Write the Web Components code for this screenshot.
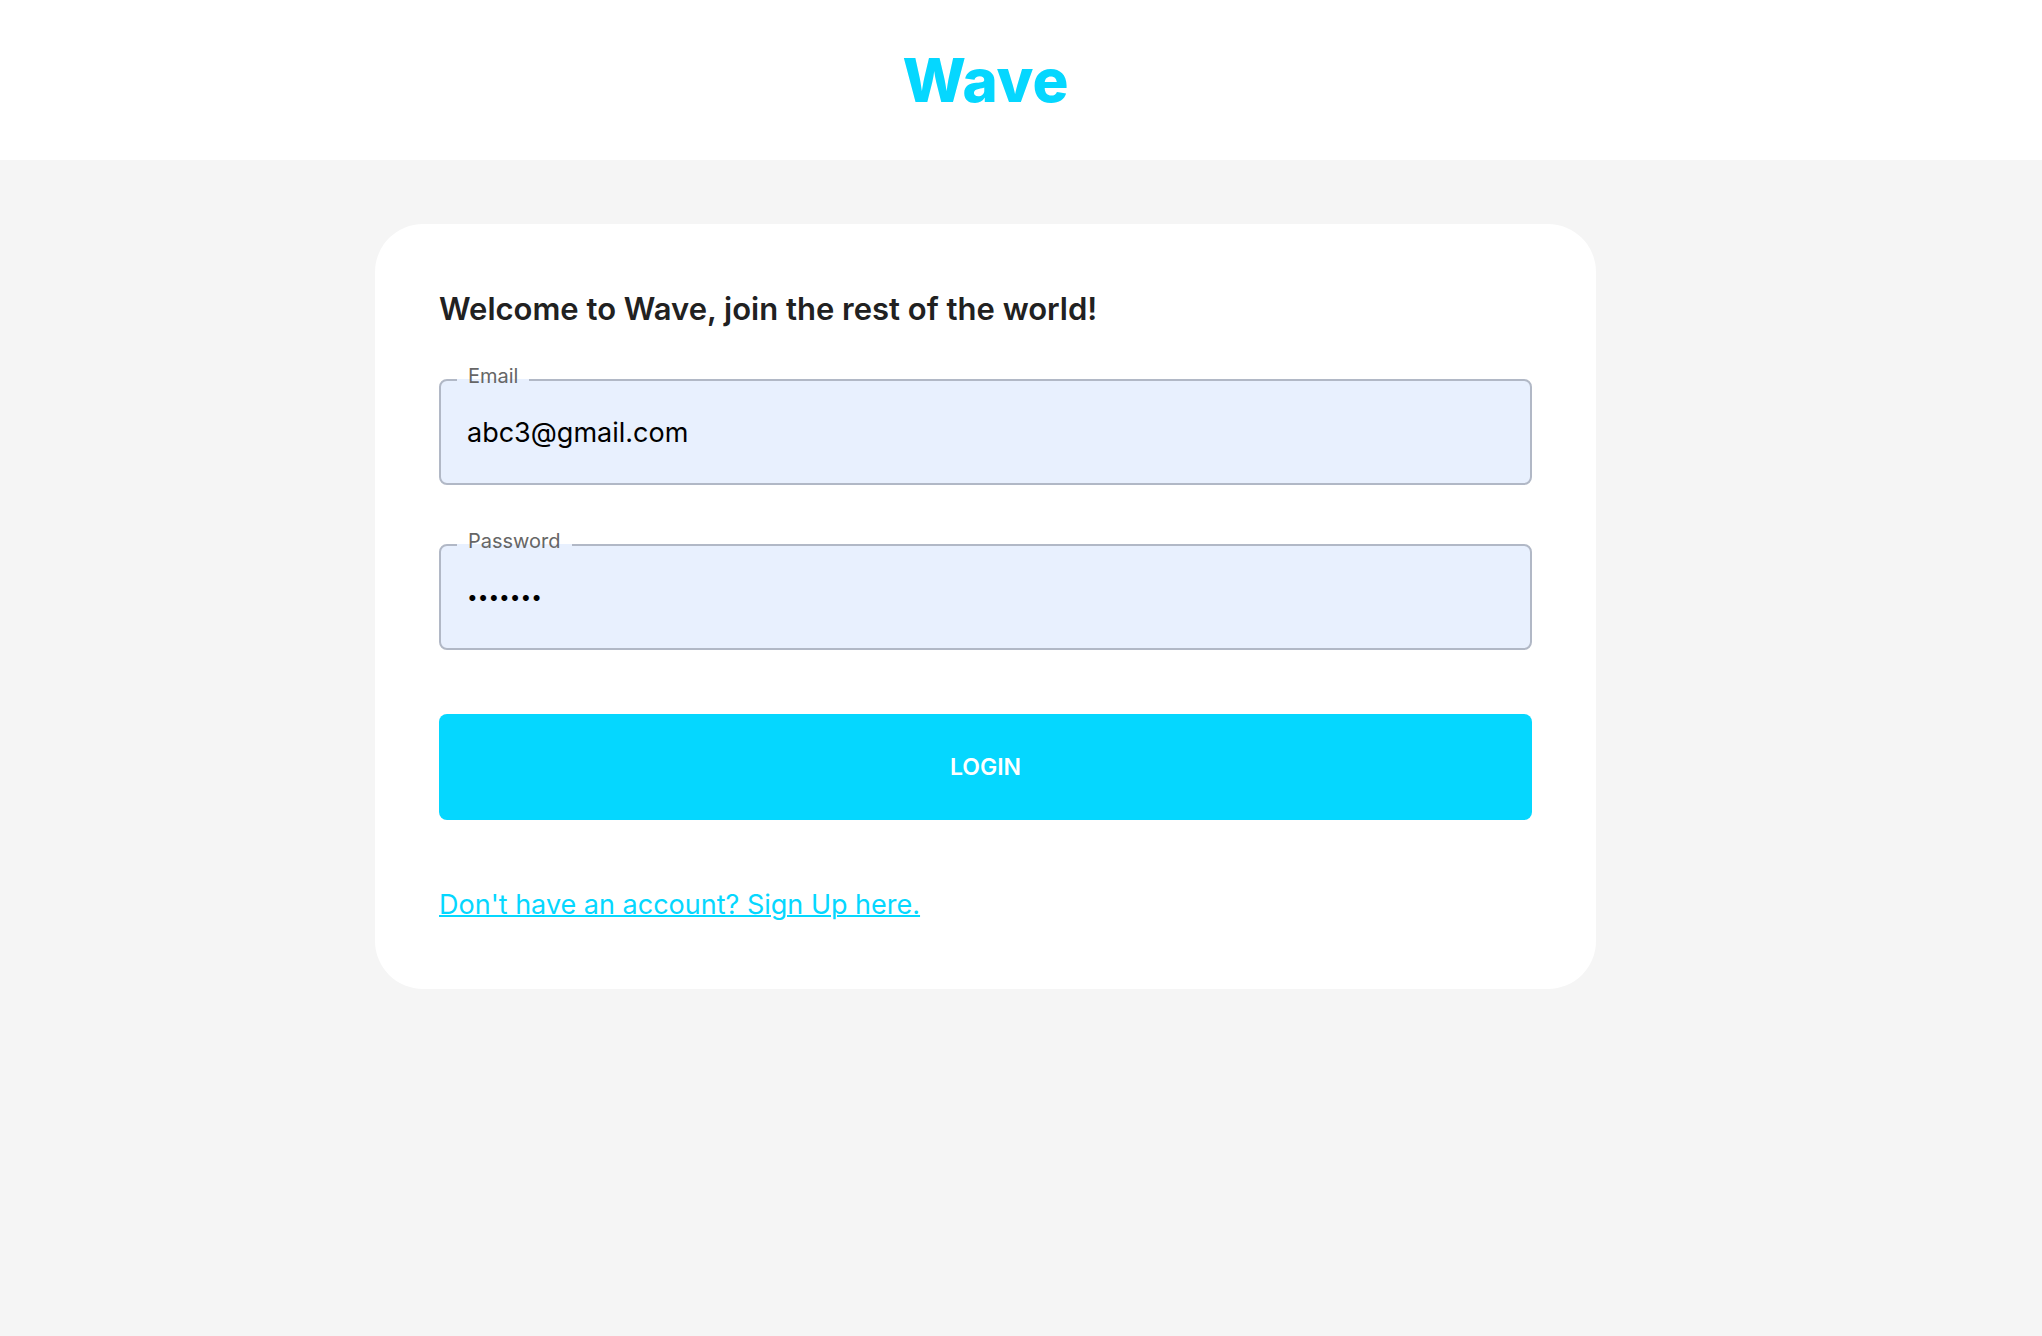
<!DOCTYPE html>
<html lang="en">
<head>
<meta charset="utf-8">
<meta name="viewport" content="width=device-width, initial-scale=1">
<title>Wave</title>
<style>
  :root {
    --brand: #05d7ff;
    --ink: #212121;
    --muted: #666;
    --field: #e8f0fe;
    --line: #b1b8c6;
  }
  body {
    margin: 0;
    min-height: 100vh;
    background: #f5f5f5;
    color: var(--ink);
    font-family: Inter, Roboto, "Liberation Sans", sans-serif;
  }
</style>
</head>
<body>
<wave-page>
  <wave-header slot="header">Wave</wave-header>
  <wave-card>
    <span slot="title">Welcome to Wave, join the rest of the world!</span>
    <wave-field label="Email" type="email" value="abc3@gmail.com"></wave-field>
    <wave-field label="Password" type="password" value="abc1234"></wave-field>
    <wave-button>LOGIN</wave-button>
    <wave-link href="#signup">Don't have an account? Sign Up here.</wave-link>
  </wave-card>
</wave-page>
<script>
  class WaveElement extends HTMLElement {
    connectedCallback() {
      if (!this.shadowRoot) {
        this.attachShadow({ mode: "open" }).innerHTML =
          "<style>*{box-sizing:border-box}" + this.styles + "</style>" + this.markup;
        this.ready();
      }
    }
    ready() {}
  }

  customElements.define("wave-page", class extends WaveElement {
    styles = `
      :host { display: block; }
      main { display: flex; justify-content: center; padding: 64px 71px 64px 0; }
      ::slotted(wave-card) { width: 100%; max-width: 1221px; }`;
    markup = `<slot name="header"></slot><main><slot></slot></main>`;
  });

  customElements.define("wave-header", class extends WaveElement {
    styles = `
      :host { display: block; background: #fff; }
      header { display: flex; justify-content: center; padding: 40px 71px 40px 0; }
      h1 { margin: 0; color: var(--brand); font-size: 60px; line-height: 80px; font-weight: 800; }`;
    markup = `<header><h1><slot></slot></h1></header>`;
  });

  customElements.define("wave-card", class extends WaveElement {
    styles = `
      :host { display: block; box-sizing: border-box; padding: 64px; border-radius: 48px; background: #fff; }
      h2 { margin: 0 0 49px; font-size: 31px; line-height: 42px; font-weight: 600; }
      form { display: flex; flex-direction: column; gap: 59px; }
      ::slotted(wave-button), ::slotted(wave-link) { margin-top: 5px; }`;
    markup = `<h2><slot name="title"></slot></h2><form><slot></slot></form>`;
  });

  customElements.define("wave-field", class extends WaveElement {
    styles = `
      :host { display: block; position: relative; }
      input {
        display: block; width: 100%; height: 106px; margin: 0; padding: 0 26px;
        border: 2px solid var(--line); border-radius: 8px; outline: 0;
        background: var(--field); color: #000; font-family: inherit; font-size: 27px;
      }
      input[type="password"] { font-size: 19px; }
      label {
        position: absolute; left: 18px; top: -15px; padding: 0 11px;
        font-size: 20px; line-height: 24px; color: var(--muted);
        background: linear-gradient(transparent 15px, var(--field) 15px);
      }`;
    markup = `<label for="control"></label><input id="control">`;
    ready() {
      this.shadowRoot.querySelector("label").textContent = this.getAttribute("label");
      const input = this.shadowRoot.querySelector("input");
      input.type = this.getAttribute("type");
      input.value = this.getAttribute("value");
    }
  });

  customElements.define("wave-button", class extends WaveElement {
    styles = `
      :host { display: block; }
      button {
        display: block; width: 100%; height: 106px; border: 0; border-radius: 8px;
        background: var(--brand); color: #fff; font-family: inherit;
        font-size: 23px; font-weight: 600; cursor: pointer;
      }`;
    markup = `<button type="button"><slot></slot></button>`;
  });

  customElements.define("wave-link", class extends WaveElement {
    styles = `
      :host { display: block; font-size: 27px; line-height: 41px; }
      a { color: var(--brand); text-decoration-thickness: 2px; }`;
    markup = `<a><slot></slot></a>`;
    ready() { this.shadowRoot.querySelector("a").href = this.getAttribute("href"); }
  });
</script>
</body>
</html>
